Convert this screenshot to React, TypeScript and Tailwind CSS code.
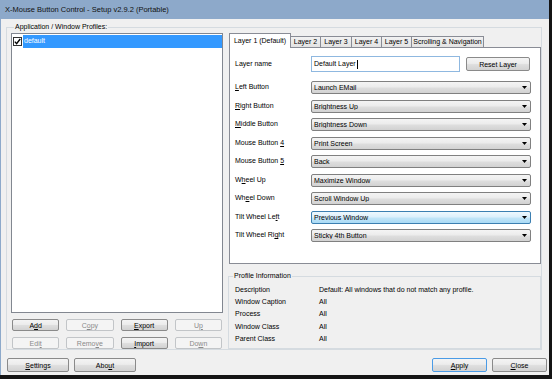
import clsx from "clsx";
import type { ReactNode } from "react";

const BTN_BG = "bg-[linear-gradient(#f4f4f4_0%,#ececec_45%,#dedede_55%,#d2d2d2_100%)]";

function Btn({
  children,
  disabled,
  focus,
  className,
}: {
  children: ReactNode;
  disabled?: boolean;
  focus?: boolean;
  className?: string;
}) {
  return (
    <button
      type="button"
      className={clsx(
        "flex items-center justify-center rounded-[2px] border leading-none",
        disabled
          ? "border-[#c2c5c8] bg-[#f4f4f4] text-[#8a8a8a]"
          : focus
            ? clsx("border-[#4a9be6] text-black", BTN_BG)
            : clsx("border-[#8a8a8a] text-black", BTN_BG),
        className
      )}
    >
      {children}
    </button>
  );
}

function Combo({ value, hot }: { value: string; hot?: boolean }) {
  return (
    <div
      className={clsx(
        "flex h-[13px] w-[220px] items-center rounded-[2px] border pl-[2px] pr-[3px]",
        hot
          ? "border-[#3c7fb1] bg-[linear-gradient(#eef8fe_0%,#dcf0fc_45%,#c2e5f8_55%,#a9daf5_100%)]"
          : clsx("border-[#808080]", BTN_BG)
      )}
    >
      <span className="flex-1 truncate leading-none">{value}</span>
      <svg width="5" height="3" viewBox="0 0 5 3">
        <path d="M0 0h5L2.5 3z" fill="#000" />
      </svg>
    </div>
  );
}

const mappings: { label: ReactNode; value: string; hot?: boolean }[] = [
  { label: <><u>L</u>eft Button</>, value: "Launch EMail" },
  { label: <><u>R</u>ight Button</>, value: "Brightness Up" },
  { label: <><u>M</u>iddle Button</>, value: "Brightness Down" },
  { label: <>Mouse Button <u>4</u></>, value: "Print Screen" },
  { label: <>Mouse Button <u>5</u></>, value: "Back" },
  { label: <>W<u>h</u>eel Up</>, value: "Maximize Window" },
  { label: <>Wh<u>e</u>el Down</>, value: "Scroll Window Up" },
  { label: <>Tilt Wheel Le<u>f</u>t</>, value: "Previous Window", hot: true },
  { label: <>Tilt Wheel Ri<u>g</u>ht</>, value: "Sticky 4th Button" },
];

const profileInfo = [
  ["Description", "Default: All windows that do not match any profile."],
  ["Window Caption", "All"],
  ["Process", "All"],
  ["Window Class", "All"],
  ["Parent Class", "All"],
];

const tabs = [
  { name: "Layer 2", w: "w-[31px]" },
  { name: "Layer 3", w: "w-[32px]" },
  { name: "Layer 4", w: "w-[31px]" },
  { name: "Layer 5", w: "w-[31px]" },
  { name: "Scrolling & Navigation", w: "w-[73px]" },
];

export default function App() {
  return (
    <div className="h-[379px] w-[552px] bg-[#141414] font-['Liberation_Sans',Arial,sans-serif] text-[7px] text-black">
      <div className="flex h-[375px] w-[549px] flex-col border-l border-[#8da9ca] bg-[#f0f0f0]">
        {/* title bar */}
        <div className="flex h-[19px] items-center bg-[#8da9ca] pl-[4px] text-[7.5px] text-[#111]">
          X-Mouse Button Control - Setup v2.9.2 (Portable)
        </div>

        <div className="mt-[3px] pl-[5px]">
          <fieldset className="flex h-[328px] w-[536px] items-start gap-[5px] border border-[#d5dbe0] pl-[4px]">
            <legend className="ml-[3px] px-[1px] leading-[10px]">Application / Window Profiles:</legend>

            {/* profiles list + buttons */}
            <div className="mt-[1px] flex w-[212px] flex-col">
              <div className="h-[280px] border border-[#828790] bg-white pt-[1px]">
                <div className="flex h-[13px] items-center">
                  <div className="mx-[1px] flex h-[9px] w-[9px] items-center justify-center border border-[#333] bg-white">
                    <svg width="7" height="7" viewBox="0 0 7 7">
                      <path d="M0.8 3.6L2.6 5.6L6.2 1" stroke="#000" strokeWidth="1.4" fill="none" />
                    </svg>
                  </div>
                  <div className="flex h-full flex-1 items-center bg-[#3399ff] pl-[1px] text-white">default</div>
                </div>
              </div>
              <div className="mt-[6px] grid grid-cols-4 gap-x-[7px] gap-y-[6px] px-[1px]">
                <Btn className="h-[12px]">A<u>d</u>d</Btn>
                <Btn className="h-[12px]" disabled>C<u>o</u>py</Btn>
                <Btn className="h-[12px]"><u>E</u>xport</Btn>
                <Btn className="h-[12px]" disabled>U<u>p</u></Btn>
                <Btn className="h-[12px]" disabled>Edi<u>t</u></Btn>
                <Btn className="h-[12px]" disabled>Remo<u>v</u>e</Btn>
                <Btn className="h-[12px]"><u>I</u>mport</Btn>
                <Btn className="h-[12px]" disabled>Do<u>w</u>n</Btn>
              </div>
            </div>

            {/* right column */}
            <div className="mt-[1px] flex w-[313px] flex-col">
              <div className="ml-[1px] flex h-[14px] items-end">
                <div className="relative z-10 -mb-px flex h-[15px] w-[62px] items-center justify-center border border-b-0 border-[#898c95] bg-white">
                  Layer 1 (Default)
                </div>
                {tabs.map((t) => (
                  <div
                    key={t.name}
                    className={clsx(
                      "-ml-px flex h-[11px] items-center justify-center border border-b-0 border-[#898c95] bg-[linear-gradient(#f2f2f2,#e3e3e3)]",
                      t.w
                    )}
                  >
                    {t.name}
                  </div>
                ))}
              </div>
              <div className="ml-[1px] h-[217px] border border-[#898c95] bg-white pl-[5px] pt-[8px]">
                <div className="flex h-[16px] items-center">
                  <div className="w-[76px]">Layer name</div>
                  <div className="flex h-[16px] w-[149px] items-center border border-[#8fb8e0] bg-white pl-[2px]">
                    Default Layer<span className="ml-[1px] h-[9px] w-px bg-black" />
                  </div>
                  <Btn className="ml-[6px] h-[14px] w-[64px]">Reset Layer</Btn>
                </div>
                <div className="mt-[9px] flex flex-col gap-[5.5px]">
                  {mappings.map((m) => (
                    <div key={m.value} className="flex items-center">
                      <div className="w-[76px]">{m.label}</div>
                      <Combo value={m.value} hot={m.hot} />
                    </div>
                  ))}
                </div>
              </div>

              <fieldset className="mt-[7px] h-[78px] border border-[#d5dbe0] pl-[4px]">
                <legend className="px-[1px] leading-[10px]">Profile Information</legend>
                <div className="ml-[2px] pt-[3px]">
                  {profileInfo.map(([k, v]) => (
                    <div key={k} className="flex h-[12.3px] items-center">
                      <div className="w-[84px]">{k}</div>
                      <div>{v}</div>
                    </div>
                  ))}
                </div>
              </fieldset>
            </div>
          </fieldset>
        </div>

        {/* bottom buttons */}
        <div className="mt-[8px] flex pl-[6px] pr-[2px]">
          <Btn className="h-[14px] w-[62px]"><u>S</u>ettings</Btn>
          <Btn className="ml-[5px] h-[14px] w-[62px]">Abo<u>u</u>t</Btn>
          <Btn className="ml-auto h-[14px] w-[55px]" focus><u>A</u>pply</Btn>
          <Btn className="ml-[5px] h-[14px] w-[55px]"><u>C</u>lose</Btn>
        </div>
      </div>
    </div>
  );
}
